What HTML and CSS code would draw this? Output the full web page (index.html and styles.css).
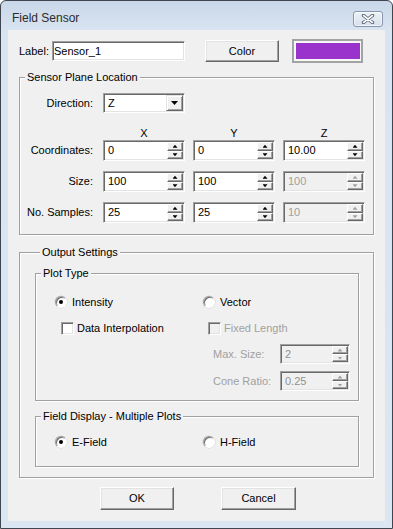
FILE: index.html
```html
<!DOCTYPE html>
<html lang="en">
<head>
<meta charset="UTF-8">
<title>Field Sensor</title>
<link rel="stylesheet" href="styles.css">
</head>
<body>

<div class="window">
  <div class="titlebar">
    <span class="title">Field Sensor</span>
    <div class="close">
      <svg width="14" height="10" viewBox="0 0 14 10">
        <path d="M2.5 1.5 L11.5 8.5 M11.5 1.5 L2.5 8.5" stroke="#4d5a6b" stroke-width="3.4" stroke-linecap="round"/>
        <path d="M2.5 1.5 L11.5 8.5 M11.5 1.5 L2.5 8.5" stroke="#fff" stroke-width="1.6" stroke-linecap="round"/>
      </svg>
    </div>
  </div>

  <div class="client">
    <div class="label-row">
      <span class="label-text">Label:</span>
      <div class="field label-input">Sensor_1</div>
      <div class="btn color-btn">Color</div>
      <div class="swatch"><div class="swatch-fill"></div></div>
    </div>

    <fieldset class="group plane">
      <legend>Sensor Plane Location</legend>
      <div class="row dir-row">
        <span class="row-label">Direction:</span>
        <div class="field combo">
          <span class="value">Z</span>
          <span class="drop"><span class="drop-arrow"></span></span>
        </div>
      </div>
      <div class="row head-row">
        <span class="row-label"></span>
        <span class="axis">X</span>
        <span class="axis">Y</span>
        <span class="axis">Z</span>
      </div>
      <div class="row spin-row">
        <span class="row-label">Coordinates:</span>
        <div class="field spin"><span class="value">0</span><span class="arrows"><span class="up"></span><span class="down"></span></span></div>
        <div class="field spin"><span class="value">0</span><span class="arrows"><span class="up"></span><span class="down"></span></span></div>
        <div class="field spin"><span class="value">10.00</span><span class="arrows"><span class="up"></span><span class="down"></span></span></div>
      </div>
      <div class="row spin-row gap">
        <span class="row-label">Size:</span>
        <div class="field spin"><span class="value">100</span><span class="arrows"><span class="up"></span><span class="down"></span></span></div>
        <div class="field spin"><span class="value">100</span><span class="arrows"><span class="up"></span><span class="down"></span></span></div>
        <div class="field spin disabled"><span class="value">100</span><span class="arrows"><span class="up"></span><span class="down"></span></span></div>
      </div>
      <div class="row spin-row gap">
        <span class="row-label">No. Samples:</span>
        <div class="field spin"><span class="value">25</span><span class="arrows"><span class="up"></span><span class="down"></span></span></div>
        <div class="field spin"><span class="value">25</span><span class="arrows"><span class="up"></span><span class="down"></span></span></div>
        <div class="field spin disabled"><span class="value">10</span><span class="arrows"><span class="up"></span><span class="down"></span></span></div>
      </div>
    </fieldset>

    <fieldset class="group output">
      <legend>Output Settings</legend>

      <fieldset class="group plot">
        <legend>Plot Type</legend>
        <div class="opt-row radios">
          <span class="opt first"><span class="radio checked"></span>Intensity</span>
          <span class="opt"><span class="radio"></span>Vector</span>
        </div>
        <div class="opt-row checks">
          <span class="opt first"><span class="check"></span>Data Interpolation</span>
          <span class="opt disabled"><span class="check"></span>Fixed Length</span>
        </div>
        <div class="vec-row">
          <span class="vec-label">Max. Size:</span>
          <div class="field spin small disabled"><span class="value">2</span><span class="arrows"><span class="up"></span><span class="down"></span></span></div>
        </div>
        <div class="vec-row second">
          <span class="vec-label">Cone Ratio:</span>
          <div class="field spin small disabled"><span class="value">0.25</span><span class="arrows"><span class="up"></span><span class="down"></span></span></div>
        </div>
      </fieldset>

      <fieldset class="group display">
        <legend>Field Display - Multiple Plots</legend>
        <div class="opt-row radios">
          <span class="opt first"><span class="radio checked"></span>E-Field</span>
          <span class="opt"><span class="radio"></span>H-Field</span>
        </div>
      </fieldset>
    </fieldset>

    <div class="button-row">
      <div class="btn">OK</div>
      <div class="btn cancel">Cancel</div>
    </div>
  </div>
</div>

</body>
</html>
```

FILE: styles.css
```css
* {
  box-sizing: border-box;
}
body {
  margin: 0;
  font-family: "Liberation Sans", Arial, sans-serif;
  font-size: 11px;
  line-height: 13px;
  color: #000;
  background: #fff;
}
.window {
  width: 393px;
  height: 529px;
  border: 1px solid #3f4650;
  border-radius: 6px 6px 0 0;
  background: linear-gradient(#c9d7e8, #d9e4f2 29px, #dbe6f3);
  padding: 0 7px 7px;
  display: flex;
  flex-direction: column;
}
.titlebar {
  height: 29px;
  display: flex;
  align-items: flex-start;
  justify-content: space-between;
  padding-left: 4px;
}
.title {
  font-size: 12px;
  line-height: 15px;
  color: #2b2b2b;
  margin-top: 10px;
}
.close {
  width: 30px;
  height: 16px;
  margin-top: 10px;
  margin-right: 2px;
  border: 1px solid #8796ab;
  border-radius: 3px;
  background: linear-gradient(#eef2f7, #d7e0ec);
  box-shadow: inset 0 0 0 1px rgba(255,255,255,0.6);
  display: flex;
  align-items: center;
  justify-content: center;
}
.client {
  flex: 1;
  background: #f0f0f0;
  padding: 0 11px;
  display: flex;
  flex-direction: column;
}

/* common controls */
.field {
  background: #fff;
  border: 1px solid;
  border-color: #a0a0a0 #fff #fff #a0a0a0;
  box-shadow: inset 1px 1px 0 #696969, inset -1px -1px 0 #e3e3e3;
  display: flex;
  align-items: center;
  padding: 1px;
}
.field .value {
  flex: 1;
  padding-left: 3px;
}
.field.disabled {
  background: #f0f0f0;
  color: #a0a0a0;
}
.btn {
  height: 23px;
  width: 75px;
  background: #f0f0f0;
  border: 1px solid;
  border-color: #fff #696969 #696969 #fff;
  box-shadow: inset -1px -1px 0 #a0a0a0, inset 1px 1px 0 #e3e3e3;
  display: flex;
  align-items: center;
  justify-content: center;
}

/* label row */
.label-row {
  margin-top: 9px;
  height: 24px;
  display: flex;
  align-items: center;
}
.label-text {
  width: 33px;
}
.label-input {
  width: 133px;
  height: 20px;
}
.color-btn {
  width: 74px;
  height: 22px;
  margin-left: 20px;
}
.swatch {
  width: 71px;
  height: 24px;
  margin-left: 13px;
  border: 2px solid #a3a3a3;
  padding: 2px 1px 2px 2px;
  background: #f7f7f7;
}
.swatch-fill {
  height: 100%;
  background: #9933cc;
}

/* group boxes */
.group {
  margin: 0;
  min-width: 0;
  border: 1px solid #a0a0a0;
  box-shadow: inset 1px 1px 0 #fff, 1px 1px 0 #fff;
}
.group legend {
  margin-left: 5px;
  padding: 0 2px;
  line-height: 13px;
  background: #f0f0f0;
}
.plane {
  margin-top: 8px;
  padding: 9px 0 11px;
}
.row {
  display: flex;
  align-items: center;
}
.row-label {
  width: 73px;
  margin-right: 10px;
  text-align: right;
}
.dir-row {
  height: 20px;
}
.combo {
  width: 82px;
  height: 20px;
}
.drop {
  width: 17px;
  height: 16px;
  background: #f0f0f0;
  border: 1px solid;
  border-color: #e3e3e3 #696969 #696969 #e3e3e3;
  box-shadow: inset 1px 1px 0 #fff, inset -1px -1px 0 #a0a0a0;
  display: flex;
  align-items: center;
  justify-content: center;
}
.drop-arrow {
  width: 7px;
  height: 4px;
  background: #000;
  clip-path: polygon(0 0, 100% 0, 50% 100%);
}
.head-row {
  height: 14px;
  margin-top: 13px;
}
.axis {
  width: 82px;
  margin-right: 8px;
  text-align: center;
}
.spin-row {
  height: 21px;
}
.spin-row.gap {
  margin-top: 10px;
}
.spin {
  width: 82px;
  height: 21px;
  margin-right: 8px;
}
.arrows {
  width: 16px;
  height: 100%;
  display: flex;
  flex-direction: column;
}
.arrows span {
  flex: 1;
  background: #f0f0f0;
  border: 1px solid;
  border-color: #fff #696969 #696969 #fff;
  box-shadow: inset -1px -1px 0 #a0a0a0;
  display: flex;
  align-items: center;
  justify-content: center;
}
.arrows span::after {
  content: "";
  width: 5px;
  height: 3px;
  background: #000;
}
.arrows .up::after {
  clip-path: polygon(50% 0, 100% 100%, 0 100%);
}
.arrows .down::after {
  clip-path: polygon(0 0, 100% 0, 50% 100%);
}
.disabled .arrows span::after {
  background: #a0a0a0;
}

/* output settings */
.output {
  margin-top: 11px;
  padding: 8px 14px 10px 15px;
}
.plot {
  padding: 15px 0 9px;
}
.display {
  margin-top: 9px;
  padding: 12px 0 17px;
}
.opt-row {
  height: 14px;
  display: flex;
  align-items: center;
}
.opt-row.radios {
  padding-left: 19px;
}
.opt-row.checks {
  margin-top: 12px;
  padding-left: 25px;
}
.opt {
  display: flex;
  align-items: center;
}
.radios .opt.first {
  width: 148px;
}
.checks .opt.first {
  width: 147px;
}
.opt.disabled {
  color: #a0a0a0;
}
.radio {
  width: 12px;
  height: 12px;
  margin-right: 5px;
  border-radius: 50%;
  background: #fff;
  border: 1px solid;
  border-color: #a0a0a0 #fff #fff #a0a0a0;
  box-shadow: inset 1px 1px 0 #696969, 0 0 0 0.5px #d0d0d0;
  display: flex;
  align-items: center;
  justify-content: center;
}
.radio.checked::after {
  content: "";
  width: 4px;
  height: 4px;
  border-radius: 50%;
  background: #000;
}
.check {
  width: 13px;
  height: 13px;
  margin-right: 3px;
  background: #fff;
  border: 1px solid;
  border-color: #a0a0a0 #fff #fff #a0a0a0;
  box-shadow: inset 1px 1px 0 #696969, inset -1px -1px 0 #e3e3e3;
}
.disabled .check {
  background: #f0f0f0;
}
.vec-row {
  margin-top: 9px;
  padding-left: 177px;
  display: flex;
  align-items: center;
  color: #a0a0a0;
}
.vec-row.second {
  margin-top: 7px;
}
.vec-label {
  width: 67px;
}
.spin.small {
  width: 70px;
  height: 20px;
  margin-right: 0;
  color: #909090;
}

/* bottom buttons */
.button-row {
  margin-top: 9px;
  padding-left: 81px;
  display: flex;
  gap: 47px;
}
.button-row .btn {
  width: 74px;
}
.button-row .cancel {
  width: 75px;
}
```
